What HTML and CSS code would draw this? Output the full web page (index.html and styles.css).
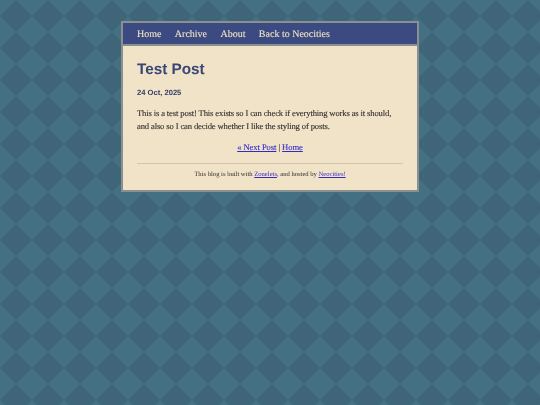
FILE: index.html
```html
<!DOCTYPE html>
<html lang="en">
<head>
<meta charset="utf-8">
<title>Test Post</title>
<link rel="stylesheet" href="styles.css">
</head>
<body>
<div class="panel">
  <nav class="nav">
    <a href="#">Home</a>
    <a href="#">Archive</a>
    <a href="#">About</a>
    <a href="#">Back to Neocities</a>
  </nav>
  <main class="content">
    <h1 class="title">Test Post</h1>
    <p class="date">24 Oct, 2025</p>
    <p class="text">This is a test post! This exists so I can check if everything works as it should, and also so I can decide whether I like the styling of posts.</p>
    <p class="pager"><a href="#">« Next Post</a> | <a href="#">Home</a></p>
    <footer class="foot">This blog is built with <a href="#">Zonelets</a>, and hosted by <a href="#">Neocities!</a></footer>
  </main>
</div>
</body>
</html>
```

FILE: styles.css
```css
html, body { margin: 0; padding: 0; height: 100%; }
body {
  background-color: #456f83;
  background-image: url("data:image/svg+xml,%3Csvg xmlns='http://www.w3.org/2000/svg' width='32' height='32'%3E%3Cpath d='M16 0L32 16L16 32L0 16Z' fill='%233e6578'/%3E%3C/svg%3E");
  background-size: 32px 32px;
  font-family: "Liberation Serif", serif;
  text-rendering: geometricPrecision;
  overflow: hidden;
}
.panel {
  box-sizing: border-box;
  width: 298px;
  margin: 21px auto 0;
  border: 2px solid #8a8f8f;
  background: #f1e3c8;
  filter: blur(0.3px);
}
.nav {
  display: flex;
  gap: 13.4px;
  height: 23px;
  box-sizing: border-box;
  padding: 1px 14px 0;
  align-items: center;
  background: #3b4a80;
  border-bottom: 2px solid #8a8f8f;
  font-size: 10px;
  -webkit-text-stroke: 0.1px #f1e3c8;
}
.nav a { color: #f1e3c8; text-decoration: none; }
.content { padding: 13px 14px 11px; }
.title {
  margin: 0;
  font: bold 15.3px/21px "Liberation Sans", sans-serif;
  color: #3a4675;
}
.date {
  margin: 6.5px 0 0;
  font: bold 7.6px/12px "Liberation Sans", sans-serif;
  color: #343d68;
}
.text {
  margin: 8.5px 0 0;
  font-size: 8.6px;
  letter-spacing: -0.14px;
  line-height: 13px;
  color: #35302e;
  -webkit-text-stroke: 0.12px #35302e;
}
.pager {
  margin: 8px 0 0;
  text-align: center;
  font-size: 8.6px;
  letter-spacing: -0.09px;
  line-height: 13px;
  color: #35302e;
  -webkit-text-stroke: 0.1px currentColor;
}
.pager a, .foot a { color: #3328c8; }
.foot {
  margin-top: 9px;
  padding-top: 5.5px;
  border-top: 1px solid #d3c5a8;
  text-align: center;
  font-size: 6.6px;
  line-height: 9px;
  color: #35302e;
}
```
